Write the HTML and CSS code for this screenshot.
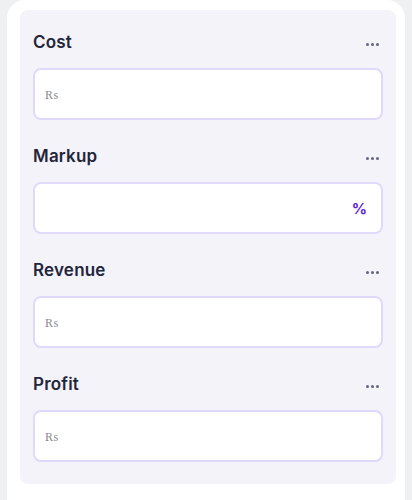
FILE: index.html
```html
<!DOCTYPE html>
<html>
<head>
<meta charset="utf-8">
<link rel="stylesheet" href="styles.css">
</head>
<body>
<div class="card">
  <div class="panel">
    <div class="field">
      <div class="field-head"><span class="label">Cost</span><span class="dots"><i></i><i></i><i></i></span></div>
      <div class="input"><span class="prefix">₨</span></div>
    </div>
    <div class="field">
      <div class="field-head"><span class="label">Markup</span><span class="dots"><i></i><i></i><i></i></span></div>
      <div class="input input-end"><span class="suffix">%</span></div>
    </div>
    <div class="field">
      <div class="field-head"><span class="label">Revenue</span><span class="dots"><i></i><i></i><i></i></span></div>
      <div class="input"><span class="prefix">₨</span></div>
    </div>
    <div class="field">
      <div class="field-head"><span class="label">Profit</span><span class="dots"><i></i><i></i><i></i></span></div>
      <div class="input"><span class="prefix">₨</span></div>
    </div>
  </div>
</div>
</body>
</html>
```
FILE: styles.css
```css
* { box-sizing: border-box; }
html, body { margin: 0; padding: 0; }
body {
  background: #eff0f2;
  width: 412px;
  height: 500px;
  overflow: hidden;
  font-family: Inter, "Noto Sans", sans-serif;
}
.card {
  margin-left: 7px;
  width: 398px;
  height: 520px;
  background: #ffffff;
  border-radius: 18px;
  padding: 10px 9px 0 13px;
}
.panel {
  background: #f4f3fa;
  border-radius: 8px;
  padding: 20px 13px 22px 13px;
  display: flex;
  flex-direction: column;
  gap: 24px;
}
.field-head {
  height: 24px;
  display: flex;
  align-items: center;
  justify-content: space-between;
  margin-bottom: 14px;
}
.label {
  font-size: 17px;
  font-weight: 600;
  color: #23253a;
  letter-spacing: 0.2px;
}
.dots {
  display: flex;
  gap: 2px;
  margin-right: 4px;
  margin-top: 4px;
}
.dots i {
  width: 3px;
  height: 3px;
  border-radius: 50%;
  background: #62637e;
}
.input {
  height: 52px;
  background: #ffffff;
  border: 2px solid #e1d9fb;
  border-radius: 8px;
  display: flex;
  align-items: center;
  padding: 0 10px;
}
.input-end { justify-content: flex-end; padding-right: 14px; }
.prefix {
  font-family: "DejaVu Serif", serif;
  font-size: 12px;
  color: #8a8a8e;
  margin-top: 2px;
}
.suffix {
  font-size: 15px;
  font-weight: 700;
  color: #5b22e0;
  margin-top: 1px;
}
```
